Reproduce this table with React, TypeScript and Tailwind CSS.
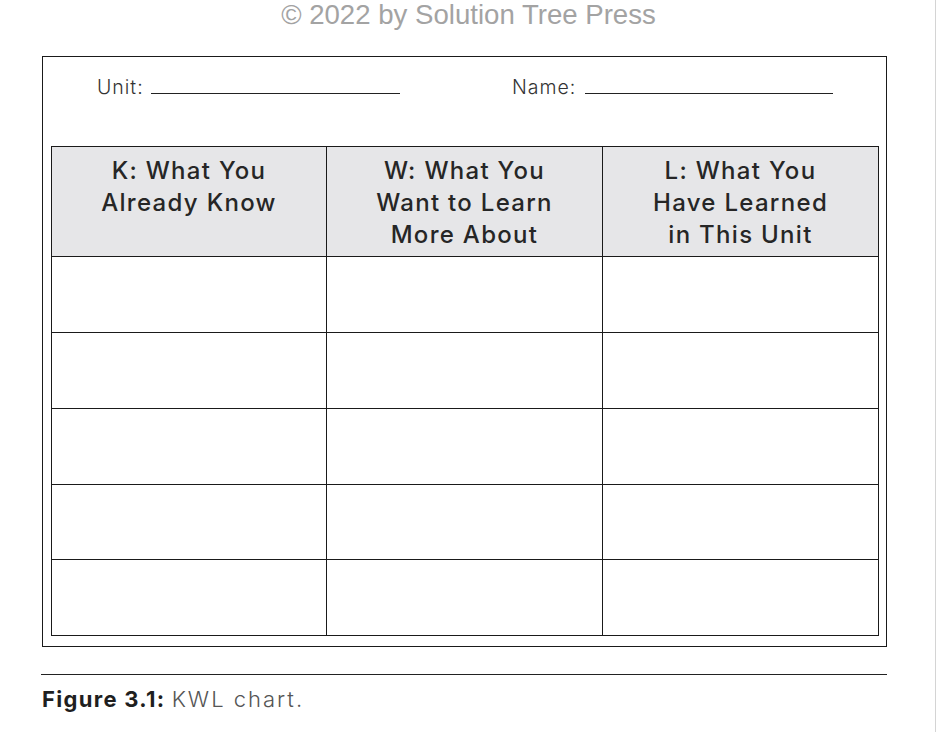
import React from 'react';

const headers: string[][] = [
    ['K: What You', 'Already Know'],
    ['W: What You', 'Want to Learn', 'More About'],
    ['L: What You', 'Have Learned', 'in This Unit'],
];

const rowHeights = ['h-[76px]', 'h-[76px]', 'h-[76px]', 'h-[75px]', 'h-[76px]'];

const App: React.FC = () => {
    return (
        <div className="w-[936px] h-[732px] bg-white border-r border-[#d4d4d4] overflow-hidden relative">
            {/* watermark */}
            <div
                className="text-center text-[27.6px] leading-[32px] text-[#a3a3a3] pl-[2px] mt-[-1px]"
                style={{ fontFamily: '"Liberation Sans", Arial, sans-serif' }}
            >
                © 2022 by Solution Tree Press
            </div>

            <div
                className="ml-[42px] mt-[25px] w-[845px] h-[591px] border border-[#1a1a1a] px-[8px]"
                style={{ fontFamily: 'Inter, "Open Sans", sans-serif' }}
            >
                {/* unit / name */}
                <div className="h-[89px] pt-[18px] flex items-start text-[19.5px] font-light text-[#333] tracking-[1px]">
                    <div className="w-[461px] pl-[46px] flex items-end">
                        <span className="leading-[24px]">Unit:</span>
                        <span className="ml-[7px] mb-[5px] w-[249px] border-b border-[#222]" />
                    </div>
                    <div className="flex items-end">
                        <span className="leading-[24px]">Name:</span>
                        <span className="ml-[9px] mb-[5px] w-[248px] border-b border-[#222]" />
                    </div>
                </div>

                {/* KWL table */}
                <div className="w-[828px] grid grid-cols-[275px_276px_276px] border-t border-l border-[#1a1a1a]">
                    {headers.map((lines, i) => (
                        <div
                            key={i}
                            className="h-[110px] bg-[#e6e6e8] border-r border-b border-[#1a1a1a] pt-[8px] text-center text-[24px] leading-[32px] font-medium text-[#262626] tracking-[1.3px]"
                        >
                            {lines.map(l => (
                                <div key={l}>{l}</div>
                            ))}
                        </div>
                    ))}
                    {rowHeights.map((h, r) =>
                        [0, 1, 2].map(c => (
                            <div key={`${r}-${c}`} className={`${h} border-r border-b border-[#1a1a1a]`} />
                        ))
                    )}
                </div>
            </div>

            {/* caption */}
            <div className="ml-[41px] mt-[27px] w-[846px] border-t border-[#222]" />
            <div
                className="ml-[42px] mt-[10px] text-[22px] leading-[28px]"
                style={{ fontFamily: 'Inter, "Open Sans", sans-serif' }}
            >
                <span className="font-bold text-[#1f1f1f] tracking-[1.3px]">Figure 3.1:</span>{' '}
                <span className="font-light text-[#555] tracking-[2px]">KWL chart.</span>
            </div>
        </div>
    );
};

export default App;
